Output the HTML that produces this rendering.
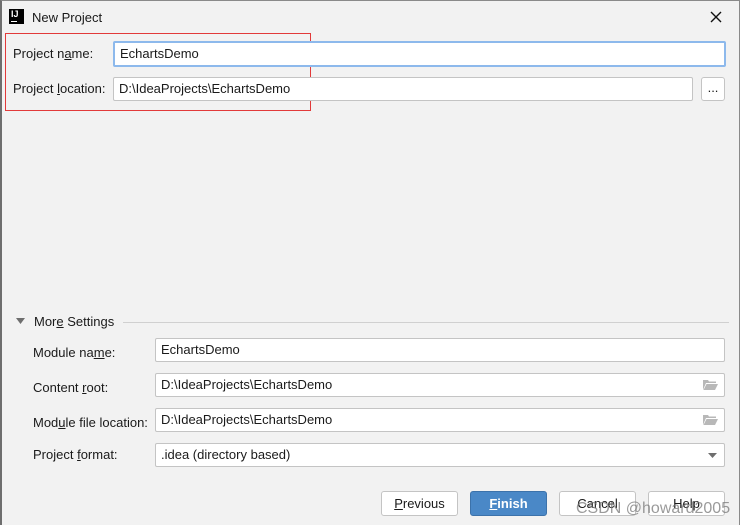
<!DOCTYPE html>
<html><head><meta charset="utf-8"><style>
*{box-sizing:border-box;margin:0;padding:0}
body{width:742px;height:525px;background:#fff;font-family:"Liberation Sans","Noto Sans CJK SC",sans-serif;font-size:13px;color:#1a1a1a;position:relative;overflow:hidden}
#win{position:absolute;left:0;top:0;width:740px;height:525px;background:#f2f2f2;border-left:2px solid #6e6e6e;border-top:1px solid #8a8a8a;border-right:1px solid #8a8a8a}
.a{position:absolute}
.lbl{position:absolute;line-height:16px;white-space:nowrap}
.in{position:absolute;background:#fff;border:1px solid #c4c4c4;padding-left:5px;line-height:21px;white-space:nowrap;border-radius:2px}
.btn{position:absolute;top:490px;width:77px;height:25px;background:#fff;border:1px solid #c4c4c4;border-radius:3px;text-align:center;line-height:23px}
u{text-decoration:underline}
.fold{position:absolute;right:6px;top:6px;width:15px;height:10px}
</style></head><body>
<div id="win">
<div class="a" style="left:7px;top:8px;width:15px;height:15px;background:#000;color:#fff;font-size:9px;font-weight:bold;line-height:11px;padding-left:2px">IJ<div style="position:absolute;left:2px;bottom:2px;width:6px;height:1px;background:#fff"></div></div>
<div class="lbl" style="left:30px;top:9px">New Project</div>
<svg class="a" style="left:708px;top:10px" width="12" height="12"><path d="M1 1L11 11M11 1L1 11" stroke="#111" stroke-width="1.4"/></svg>

<div class="a" style="left:3px;top:32px;width:306px;height:78px;border:1px solid #e23a3a"></div>
<div class="lbl" style="left:11px;top:45px">Project n<u>a</u>me:</div>
<div class="in" style="left:111px;top:40px;width:613px;height:26px;border:2px solid #8db9ec;line-height:22px;padding-left:5px">EchartsDemo</div>
<div class="lbl" style="left:11px;top:80px">Project <u>l</u>ocation:</div>
<div class="in" style="left:111px;top:76px;width:580px;height:24px">D:\IdeaProjects\EchartsDemo</div>
<div class="in" style="left:699px;top:76px;width:24px;height:24px;padding:0;text-align:center;line-height:20px;border-radius:3px">...</div>

<svg class="a" style="left:14px;top:317px" width="10" height="7"><path d="M0 0H9L4.5 6Z" fill="#6e6e6e"/></svg>
<div class="lbl" style="left:32px;top:313px">Mor<u>e</u> Settings</div>
<div class="a" style="left:121px;top:321px;width:606px;height:1px;background:#d0d0d0"></div>

<div class="lbl" style="left:31px;top:344px">Module na<u>m</u>e:</div>
<div class="in" style="left:153px;top:337px;width:570px;height:24px">EchartsDemo</div>
<div class="lbl" style="left:31px;top:379px">Content <u>r</u>oot:</div>
<div class="in" style="left:153px;top:372px;width:570px;height:24px">D:\IdeaProjects\EchartsDemo<svg class="fold" viewBox="0 0 15 10"><path d="M0 0H5L6 1.5H13V3H3L0 10Z M3.5 4H15L12 10H0.5Z" fill="#b8b8b8"/></svg></div>
<div class="lbl" style="left:31px;top:414px">Mod<u>u</u>le file location:</div>
<div class="in" style="left:153px;top:407px;width:570px;height:24px">D:\IdeaProjects\EchartsDemo<svg class="fold" viewBox="0 0 15 10"><path d="M0 0H5L6 1.5H13V3H3L0 10Z M3.5 4H15L12 10H0.5Z" fill="#b8b8b8"/></svg></div>
<div class="lbl" style="left:31px;top:446px">Project <u>f</u>ormat:</div>
<div class="in" style="left:153px;top:442px;width:570px;height:24px">.idea (directory based)<svg class="a" style="right:6px;top:9px" width="10" height="6"><path d="M0 0H9L4.5 5Z" fill="#6e6e6e"/></svg></div>

<div class="btn" style="left:379px"><u>P</u>revious</div>
<div class="btn" style="left:468px;background:#4a88c7;border-color:#3c72aa;color:#fff;font-weight:bold"><u>F</u>inish</div>
<div class="btn" style="left:557px">Cancel</div>
<div class="btn" style="left:646px">Help</div>
</div>
<div class="a" style="left:576px;top:500px;font-size:16px;color:rgba(120,120,120,0.75);white-space:nowrap">CSDN @howard2005</div>
</body></html>
